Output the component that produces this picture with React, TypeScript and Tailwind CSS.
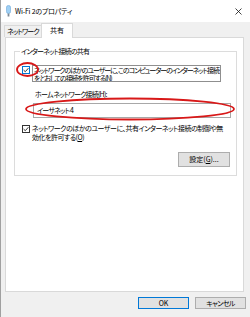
import React from "react";

const font = {
  fontFamily: '"Noto Sans CJK JP", "Noto Sans", sans-serif',
  fontFeatureSettings: '"palt"',
};

function Check({ border }: { border: string }) {
  return (
    <div className={`w-[8px] h-[8px] border bg-white flex items-center justify-center shrink-0 ${border}`}>
      <svg width="6" height="6" viewBox="0 0 6 6">
        <path d="M0.6 3.1 L2.3 4.7 L5.4 1.2" fill="none" stroke="#222" strokeWidth="0.9" />
      </svg>
    </div>
  );
}

export default function App() {
  return (
    <div
      className="w-[250px] h-[317px] bg-[#f0f0f0] border-l border-[#a0a0a0] relative overflow-hidden flex flex-col text-[7px] text-black whitespace-nowrap"
      style={font}
    >
      {/* title bar */}
      <div className="h-[22px] bg-white flex items-center pl-[5px] shrink-0">
        <svg width="5" height="12" viewBox="0 0 5 12">
          <rect x="0.5" y="0.5" width="4" height="8" rx="1.8" fill="#9fd0f5" stroke="#6aa6d6" strokeWidth="0.6" />
          <rect x="1.6" y="8.5" width="1.8" height="3" fill="#7d8a96" />
        </svg>
        <span className="ml-[4px] leading-[9px] tracking-[-0.2px]">Wi-Fi 2のプロパティ</span>
        <svg className="ml-auto mr-[8px]" width="7" height="7" viewBox="0 0 7 7">
          <path d="M0.5 0.5 L6.5 6.5 M6.5 0.5 L0.5 6.5" stroke="#111" strokeWidth="0.8" />
        </svg>
      </div>

      {/* tabs */}
      <div className="h-[15px] flex items-end pl-[3px] shrink-0">
        <div className="h-[12px] w-[38px] border border-b-0 border-[#d9d9d9] bg-[#f0f0f0] flex items-center justify-center leading-[9px] tracking-[-0.9px]">
          ネットワーク
        </div>
        <div className="h-[15px] w-[32px] -ml-px -mb-px border border-b-0 border-[#d9d9d9] bg-white relative z-10 flex items-center justify-center leading-[9px] pb-[2px]">
          共有
        </div>
      </div>

      {/* panel */}
      <div className="ml-[4px] mr-[6px] h-[255px] border border-[#d9d9d9] bg-white flex flex-col shrink-0">
        <div className="ml-[8px] w-[223px] mt-[13px] border border-[#dcdcdc] flex flex-col pb-[8px]">
          <span className="self-start -mt-[5px] ml-[5px] px-[1px] bg-white leading-[9px] tracking-[-0.8px]">
            インターネット接続の共有
          </span>

          <div className="flex items-start mt-[9px] ml-[7px]">
            <div className="mt-[1px]">
              <Check border="border-[#0078d7]" />
            </div>
            <div className="ml-[2px] w-[189px] h-[17px] border border-[#8f8f8f] pl-[1px] leading-[8px] tracking-[-1.1px] overflow-hidden">
              ネットワークのほかのユーザーに、このコンピューターのインターネット接続
              <br />
              をとおしての接続を許可する(<span className="underline">N</span>)
            </div>
          </div>

          <div className="mt-[8px] ml-[20px] leading-[9px] tracking-[-0.8px]">
            ホーム ネットワーク接続(<span className="underline">H</span>):
          </div>

          <div className="mt-[4px] ml-[18px] w-[198px] h-[15px] border border-[#a8a8a8] pl-[3px] flex items-center leading-[9px] tracking-[-0.8px]">
            イーサネット 4
          </div>

          <div className="flex items-start mt-[7px] ml-[7px]">
            <Check border="border-[#333]" />
            <div className="ml-[2px] leading-[9px] -mt-[1px] tracking-[-0.5px]">
              ネットワークのほかのユーザーに、共有インターネット接続の制御や無
              <br />
              効化を許可する(<span className="underline">O</span>)
            </div>
          </div>

          <button className="self-end mr-[6px] mt-[10px] w-[52px] h-[15px] bg-[#e1e1e1] border border-[#adadad] flex items-center justify-center leading-[9px]">
            設定(<span className="underline">G</span>)...
          </button>
        </div>
      </div>

      {/* bottom buttons */}
      <div className="flex justify-end gap-[6px] mr-[4px] mt-[5px]">
        <button className="w-[51px] h-[12px] bg-[#e1e1e1] border border-[#0078d7] flex items-center justify-center leading-[9px]">
          OK
        </button>
        <button className="w-[51px] h-[12px] bg-[#e1e1e1] border border-[#adadad] flex items-center justify-center leading-[9px] tracking-[-0.6px]">
          キャンセル
        </button>
      </div>

      {/* red annotation ellipses */}
      <svg className="absolute left-0 top-0 pointer-events-none" width="250" height="317" viewBox="0 0 250 317">
        <ellipse cx="26.5" cy="69.5" rx="10.5" ry="6.5" fill="none" stroke="#d81818" strokeWidth="1.8" />
        <ellipse cx="129" cy="109" rx="104" ry="10.5" fill="none" stroke="#d81818" strokeWidth="1.8" />
      </svg>
    </div>
  );
}
